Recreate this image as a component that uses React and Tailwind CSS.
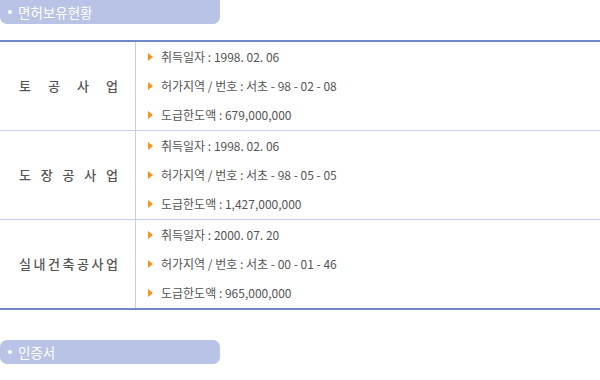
import React from 'react'

const LICENSES = [
  {
    name: ['토', '공', '사', '업'],
    date: '1998. 02. 06',
    permit: '서초 - 98 - 02 - 08',
    limit: '679,000,000',
  },
  {
    name: ['도', '장', '공', '사', '업'],
    date: '1998. 02. 06',
    permit: '서초 - 98 - 05 - 05',
    limit: '1,427,000,000',
  },
  {
    name: ['실', '내', '건', '축', '공', '사', '업'],
    date: '2000. 07. 20',
    permit: '서초 - 00 - 01 - 46',
    limit: '965,000,000',
  },
]

const font = { fontFamily: '"Noto Sans CJK KR", "Noto Sans", sans-serif' }

function SectionTitle({ children, className = '' }) {
  return (
    <div className={`w-[220px] h-[24px] bg-[#b8c3e6] flex items-center pl-[8px] text-white text-[13.5px] ${className}`}>
      <span className="w-[4px] h-[4px] rounded-full bg-white mr-[6px]" />
      {children}
    </div>
  )
}

function Item({ label, value }) {
  return (
    <div className="flex items-center h-[30px]">
      <span className="w-0 h-0 border-y-[4px] border-y-transparent border-l-[5px] border-l-[#f7931e] ml-[148px] mr-[8px]" />
      <span className="text-[12px] text-[#555]">
        {label} : {value}
      </span>
    </div>
  )
}

export default function App() {
  return (
    <div className="w-[600px] h-[380px] bg-white" style={font}>
      <SectionTitle className="rounded-b-[7px]">면허보유현황</SectionTitle>

      <div className="mt-[16px] border-t-2 border-b-2 border-[#6f87cc]">
        {LICENSES.map((row, i) => (
          <div
            key={i}
            className={`flex h-[88px] ${i < LICENSES.length - 1 ? 'box-content border-b border-[#c5cdf0]' : ''}`}
          >
            <div className="w-[136px] shrink-0 border-r border-[#c5cdf0] flex items-center justify-between pl-[19px] pr-[17px] text-[13px] text-[#555] font-medium">
              {row.name.map((c, j) => (
                <span key={j}>{c}</span>
              ))}
            </div>
            <div className="flex-1 flex flex-col justify-center -ml-[136px]">
              <Item label="취득일자" value={row.date} />
              <Item label="허가지역 / 번호" value={row.permit} />
              <Item label="도급한도액" value={row.limit} />
            </div>
          </div>
        ))}
      </div>

      <SectionTitle className="mt-[30px] rounded-[7px]">인증서</SectionTitle>
    </div>
  )
}
